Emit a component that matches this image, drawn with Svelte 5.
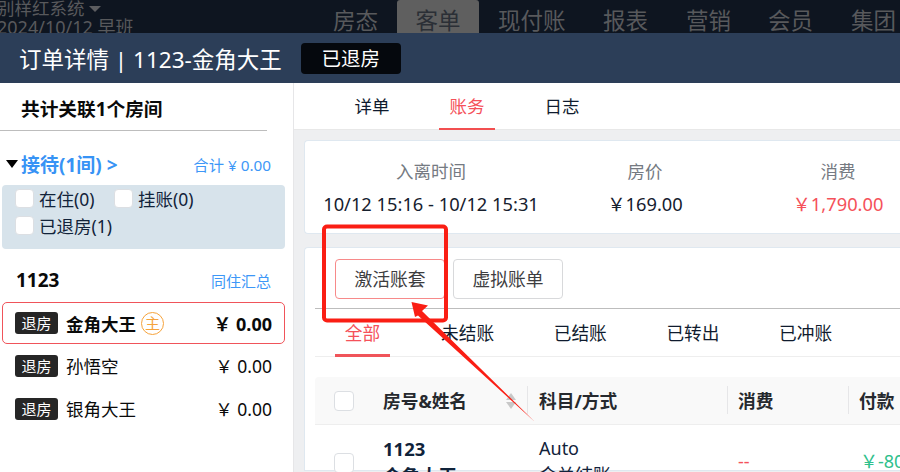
<script>
  const nav = [
    { t: '房态', w: 64 },
    { t: '客单', w: 82, on: true },
    { t: '现付账', w: 105 },
    { t: '报表', w: 83 },
    { t: '营销', w: 82 },
    { t: '会员', w: 83 },
    { t: '集团', w: 49 }
  ];
  const guests = [
    { n: '金角大王', a: '0.00', sel: true },
    { n: '孙悟空', a: '0.00' },
    { n: '银角大王', a: '0.00' }
  ];
  const filters = ['全部', '未结账', '已结账', '已转出', '已冲账'];
</script>

<div class="page">
  <header class="nav">
    <div class="brand">
      <div class="b1">别样红系统 <i class="caret"></i></div>
      <div class="b2">2024/10/12 早班</div>
    </div>
    <nav class="menu">
      {#each nav as n}
        <span class="mi" class:on={n.on} style="width:{n.w}px">{n.t}</span>
      {/each}
    </nav>
  </header>

  <div class="title">
    <span class="tt">订单详情 | 1123-金角大王</span>
    <span class="st">已退房</span>
  </div>

  <div class="body">
    <aside class="side">
      <div class="side-h">共计关联1个房间</div>
      <div class="grp">
        <span class="tri"></span>
        <span class="grp-t">接待(1间) &gt;</span>
        <span class="sum">合计 ¥ 0.00</span>
      </div>
      <div class="checks">
        <div class="cline">
          <span class="ck"></span><span class="cl w1">在住(0)</span>
          <span class="ck"></span><span class="cl">挂账(0)</span>
        </div>
        <div class="cline">
          <span class="ck"></span><span class="cl">已退房(1)</span>
        </div>
      </div>
      <div class="room"><b>1123</b><span>同住汇总</span></div>
      {#each guests as g}
        <div class="guest" class:sel={g.sel}>
          <span class="tag">退房</span>
          <span class="gn">{g.n}</span>
          {#if g.sel}<span class="zhu">主</span>{/if}
          <span class="amt">￥ {g.a}</span>
        </div>
      {/each}
    </aside>

    <main class="main">
      <div class="tabs">
        <span class="tab">详单</span>
        <span class="tab on">账务</span>
        <span class="tab">日志</span>
      </div>
      <section class="card info">
        <div class="col"><span class="lb">入离时间</span><span class="val">10/12 15:16 - 10/12 15:31</span></div>
        <div class="col"><span class="lb">房价</span><span class="val">￥169.00</span></div>
        <div class="col"><span class="lb">消费</span><span class="val red">￥1,790.00</span></div>
      </section>
      <section class="card bill">
        <div class="btns">
          <span class="btn act">激活账套</span>
          <span class="btn">虚拟账单</span>
        </div>
        <div class="filters">
          {#each filters as f, i}
            <span class="f" class:on={i === 0}>{f}</span>
          {/each}
        </div>
        <div class="thead">
          <span class="ck tck"></span>
          <span class="th th1">房号&amp;姓名<span class="sort"><i class="up"></i><i class="dn"></i></span></span>
          <span class="th th2">科目/方式</span>
          <span class="th th3">消费</span>
          <span class="th th4">付款</span>
        </div>
        <div class="trow">
          <span class="ck tck rck"></span>
          <div class="td1"><b>1123</b><b>金角大王</b></div>
          <div class="td2"><span>Auto</span><span>金关结账</span></div>
          <div class="td3">--</div>
          <div class="td4">￥-800.00</div>
        </div>
      </section>
    </main>
  </div>

  <svg class="mark" width="900" height="472" viewBox="0 0 900 472" aria-hidden="true">
    <rect x="324" y="226.500" width="122" height="94" rx="3" fill="none" stroke="#fa1e14" stroke-width="4" />
    <path d="M411.500 302 L428 305.500 L422 311 L535 422 L418 315.500 L415 317 Z" fill="#fa1e14" />
  </svg>
</div>

<style>
  :global(body) { margin: 0; }
  .page {
    position: relative;
    width: 900px;
    height: 472px;
    overflow: hidden;
    background: #fff;
    font-family: "Noto Sans", "Noto Sans CJK SC", sans-serif;
    color: #0f1b2e;
  }
  .nav {
    height: 33px;
    background: #0e1520;
    display: flex;
    color: #58595c;
    overflow: hidden;
  }
  .brand { width: 336px; flex: none; line-height: 19px; font-size: 17.500px; margin-top: -1px; margin-left: -3px; white-space: nowrap; }
  .b1 { height: 19px; }
  .b2 { font-size: 18px; }
  .caret {
    display: inline-block;
    border: 6px solid transparent;
    border-top: 6px solid #5c5d60;
    border-bottom: 0;
    vertical-align: 3px;
  }
  .menu { display: flex; }
  .mi { font-size: 22.500px; line-height: 41px; height: 33px; white-space: nowrap; flex: none; }
  .mi.on { background: #5f5f5f; color: #2b2f36; text-align: center; border-radius: 3px 3px 0 0; margin-right: 19px; }
  .title {
    height: 50px;
    background: #2c3e58;
    display: flex;
    align-items: center;
    padding-left: 19px;
    gap: 19px;
    color: #fff;
  }
  .tt { font-size: 22.500px; white-space: nowrap; }
  .st {
    width: 100px;
    height: 31px;
    line-height: 31px;
    background: #05080d;
    border-radius: 4px;
    text-align: center;
    font-size: 19.500px;
  }
  .body { display: flex; height: 389px; }
  .side {
    width: 294px;
    flex: none;
    box-sizing: border-box;
    border-right: 1px solid #e6e6e8;
  }
  .side-h {
    margin: 0 26px 0 0;
    padding-left: 21px;
    height: 47px;
    line-height: 51px;
    font-size: 18.700px;
    font-weight: 700;
    color: #0a0a0a;
    border-bottom: 1px solid #bdbdbd;
  }
  .grp { display: flex; align-items: center; margin-top: 16px; height: 33px; padding: 0 22px 0 6px; }
  .tri { border: 6.500px solid transparent; border-top: 8px solid #000; border-bottom: 0; margin-right: 3px; }
  .grp-t { color: #3793f5; font-weight: 700; font-size: 19px; }
  .sum { margin-left: auto; color: #3d97f7; font-size: 15.300px; }
  .checks {
    margin: 5px 8px 0 2px;
    height: 64px;
    background: #d7e3eb;
    border-radius: 4px;
  }
  .cline { display: flex; align-items: center; height: 27px; padding-left: 13px; }
  .ck {
    display: inline-block;
    box-sizing: border-box;
    width: 19px;
    height: 19px;
    flex: none;
    background: #fff;
    border: 1px solid #dcdfe3;
    border-radius: 4px;
  }
  .cl { margin-left: 5px; font-size: 17.500px; white-space: nowrap; color: #12233a; }
  .cl.w1 { width: 75px; }
  .room { display: flex; justify-content: space-between; align-items: center; margin-top: 9px; padding: 0 22px 0 16px; height: 44px; box-sizing: border-box; }
  .room b { font-size: 19px; color: #0a0a0a; }
  .room span { font-size: 15px; color: #3d97f7; }
  .guest {
    display: flex;
    align-items: center;
    box-sizing: border-box;
    margin: 0 8px 0 2px;
    height: 42px;
    padding: 0 12px 0 12px;
    border: 1px solid transparent;
    color: #0a0a0a;
    font-size: 17.500px;
  }
  .guest + .guest { height: 43px; }
  .guest.sel { border-color: #f0545a; border-radius: 5px; font-weight: 700; }
  .guest.sel .amt { font-size: 18px; }
  .tag {
    width: 43px;
    height: 22px;
    line-height: 22px;
    background: #262626;
    border-radius: 3px;
    color: #fff;
    text-align: center;
    font-size: 15px;
    font-weight: 400;
    margin-right: 8px;
    flex: none;
  }
  .zhu {
    width: 21px;
    height: 21px;
    line-height: 20px;
    margin-left: 5px;
    border: 1px solid #f6a33c;
    border-radius: 50%;
    color: #f6a33c;
    font-size: 15px;
    font-weight: 400;
    text-align: center;
    flex: none;
  }
  .amt { margin-left: auto; white-space: nowrap; }
  .main { flex: 1; min-width: 0; background: #eeeff1; overflow: hidden; }
  .tabs {
    height: 47px;
    box-sizing: border-box;
    background: #fff;
    display: flex;
    padding-left: 50px;
    gap: 39px;
    border-bottom: 1px solid #e8e8e8;
  }
  .tab { width: 56px; box-sizing: border-box; text-align: center; font-size: 17.500px; line-height: 47px; height: 47px; color: #0f1b2e; }
  .tab.on { color: #f5515a; border-bottom: 2px solid #f24f50; }
  .card {
    margin-left: 10px;
    background: #fff;
    border: 1px solid #dfe8f0;
    border-right: 0;
    border-radius: 4px 0 0 4px;
  }
  .info {
    margin-top: 10px;
    height: 94px;
    box-sizing: border-box;
    display: grid;
    grid-template-columns: 252px 176px 210px;
    justify-items: center;
    padding-top: 18px;
  }
  .col { display: flex; flex-direction: column; align-items: center; gap: 9px; white-space: nowrap; }
  .lb { color: #757a82; font-size: 17.500px; line-height: 24px; }
  .val { font-size: 18.300px; line-height: 24px; color: #16202e; }
  .val.red { color: #f5515a; }
  .bill { margin-top: 13px; height: 224px; box-sizing: border-box; border-radius: 4px 0 0 0; }
  .btns { display: flex; gap: 8px; padding: 11px 0 0 30px; height: 60px; box-sizing: border-box; }
  .btn {
    width: 110px;
    height: 40px;
    line-height: 38px;
    box-sizing: border-box;
    border: 1px solid #d8d9db;
    border-radius: 4px;
    text-align: center;
    font-size: 17.800px;
    color: #3d3d3f;
  }
  .btn.act { border-color: #f78a8a; }
  .filters {
    display: flex;
    margin: 0 0 0 10px;
    height: 49px;
    box-sizing: border-box;
    border-top: 1px solid #bdbdbd;
    border-bottom: 1px solid #eee;
    padding-left: 20px;
  }
  .f { width: 112.700px; flex: none; font-size: 17.700px; line-height: 48px; white-space: nowrap; }
  .f.on { width: 55px; margin-right: 51px; box-sizing: border-box; height: 48px; border-bottom: 3px solid #f0545a; color: #f5515a; text-align: center; }
  .thead {
    margin: 20px 0 0 10px;
    height: 48px;
    box-sizing: border-box;
    background: #f9f9f9;
    border-bottom: 1px solid #eee;
    display: flex;
    align-items: center;
    border-radius: 4px 0 0 0;
    position: relative;
  }
  .tck { margin-left: 19px; position: absolute; width: 20px; height: 20px; }
  .th { font-size: 17.700px; font-weight: 700; color: #26292e; white-space: nowrap; position: absolute; height: 28px; padding-top: 1px; line-height: 28px; }
  .th1 { left: 68px; width: 145px; }
  .th2 { left: 224px; }
  .th2::before, .th3::before, .th4::before {
    content: "";
    position: absolute;
    left: -12px;
    top: 0;
    width: 1px;
    height: 28px;
    background: #e6e6e8;
  }
  .th3 { left: 423px; }
  .th4 { left: 544px; }
  .th3::before, .th4::before { left: -11px; }
  .sort { position: absolute; left: 123px; top: 7px; display: flex; flex-direction: column; gap: 2px; }
  .sort i { display: block; border: 5.500px solid transparent; }
  .up { border-top: 0 !important; border-bottom: 7px solid #c8c8c8 !important; }
  .dn { border-bottom: 0 !important; border-top: 7px solid #c8c8c8 !important; }
  .trow { position: relative; margin-left: 10px; height: 60px; }
  .rck { top: 28px; }
  .td1 { position: absolute; left: 68px; top: 10px; display: flex; flex-direction: column; line-height: 27px; font-size: 18.500px; color: #10233a; }
  .td2 { position: absolute; left: 224px; top: 10px; display: flex; flex-direction: column; line-height: 27px; font-size: 18px; color: #12233a; }
  .td3 { position: absolute; left: 423px; top: 23px; font-size: 18px; line-height: 27px; color: #f5515a; }
  .td4 { position: absolute; left: 545px; top: 23px; font-size: 18px; line-height: 27px; color: #2fc08c; white-space: nowrap; }
  .mark { position: absolute; left: 0; top: 0; pointer-events: none; }
</style>
